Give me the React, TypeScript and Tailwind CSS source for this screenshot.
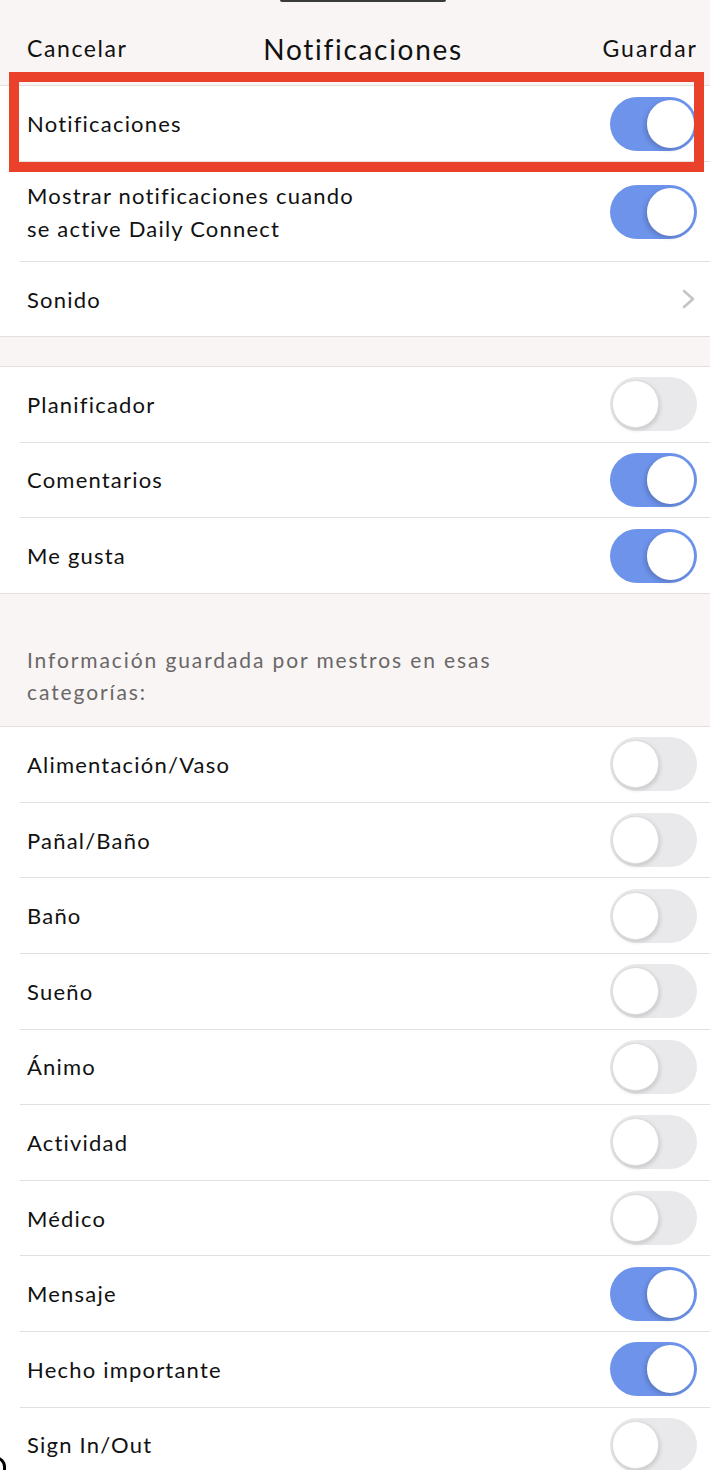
import React from "react";

function Toggle({ on }: { on: boolean }) {
  return on ? (
    <div className="w-[87px] h-[54px] rounded-full bg-[#6d93eb] shrink-0 flex items-center justify-end pr-[3px]">
      <div className="w-[47px] h-[48px] rounded-full bg-white shadow-[-2px_2px_4px_rgba(0,0,0,0.18)]" />
    </div>
  ) : (
    <div className="w-[87px] h-[54px] rounded-full bg-[#e9e9eb] shrink-0 flex items-center justify-start pl-[2px]">
      <div className="w-[47px] h-[48px] rounded-full bg-white border border-[#dcdcdc] shadow-[1px_2px_4px_rgba(0,0,0,0.15)]" />
    </div>
  );
}

function Row({
  label,
  on,
  chevron,
  sep = true,
  h = "h-[75.6px]",
}: {
  label: React.ReactNode;
  on?: boolean;
  chevron?: boolean;
  sep?: boolean;
  h?: string;
}) {
  return (
    <div className={`flex shrink-0 pl-[20px] bg-white ${h}`}>
      <div
        className={`flex-1 flex items-center justify-between pl-[7px] pr-[13px] ${
          sep ? "border-b border-[#e2e0df]" : ""
        }`}
      >
        <div className="text-[22px] leading-[33px] tracking-[1.2px] text-[#111]">{label}</div>
        {chevron ? (
          <svg width="14" height="20" viewBox="0 0 14 20" className="mr-[1px]">
            <path
              d="M2 2 L11 10 L2 18"
              fill="none"
              stroke="#c4c4c8"
              strokeWidth="2.6"
              strokeLinecap="round"
              strokeLinejoin="round"
            />
          </svg>
        ) : (
          <Toggle on={!!on} />
        )}
      </div>
    </div>
  );
}

export default function App() {
  const cats: [string, boolean][] = [
    ["Alimentación/Vaso", false],
    ["Pañal/Baño", false],
    ["Baño", false],
    ["Sueño", false],
    ["Ánimo", false],
    ["Actividad", false],
    ["Médico", false],
    ["Mensaje", true],
    ["Hecho importante", true],
    ["Sign In/Out", false],
  ];
  return (
    <div
      className="relative w-[710px] h-[1470px] overflow-hidden bg-white flex flex-col"
      style={{ fontFamily: "Lato, 'Noto Sans', sans-serif" }}
    >
      {/* Header */}
      <div className="h-[86px] shrink-0 bg-[#f8f5f4] border-b border-[#e2e0df] flex flex-col">
        <div className="flex justify-center pl-[15px]">
          <div className="w-[166px] h-[2px] rounded-b-full bg-[#3a3a3a]" />
        </div>
        <div className="flex-1 flex items-center justify-between pl-[27px] pr-[12px] pt-[10px]">
          <span className="text-[23px] tracking-[1.6px] text-[#111]">Cancelar</span>
          <span className="text-[28px] tracking-[1.7px] text-[#111] ml-[-4px]">Notificaciones</span>
          <span className="text-[23px] tracking-[2px] text-[#111]">Guardar</span>
        </div>
      </div>

      {/* Section 1 */}
      <div className="relative shrink-0">
        <Row label="Notificaciones" on h="h-[76px]" />
        <Row
          label={
            <>
              Mostrar notificaciones cuando
              <br />
              se active Daily Connect
            </>
          }
          on
          h="h-[100px]"
        />
        <Row label="Sonido" chevron sep={false} h="h-[74px]" />
        {/* Red highlight overlay */}
        <div className="absolute left-[9px] top-[-14px] w-[695px] h-[100px] border-[10px] border-[#e9412a] pointer-events-none" />
      </div>

      <div className="h-[31px] shrink-0 bg-[#f8f5f4] border-y border-[#e2e0df]" />

      {/* Section 2 */}
      <Row label="Planificador" on={false} />
      <Row label="Comentarios" on />
      <Row label="Me gusta" on sep={false} h="h-[75px]" />

      <div className="h-[134px] shrink-0 bg-[#f8f5f4] border-y border-[#e2e0df] pl-[27px] pt-[50px]">
        <div className="text-[21px] leading-[32px] tracking-[1.9px] text-[#6a6767]">
          Información guardada por mestros en esas
          <br />
          categorías:
        </div>
      </div>

      {cats.map(([l, o]) => (
        <Row key={l} label={l} on={o} />
      ))}

      <div className="absolute left-[-16px] bottom-[-16px] w-[22px] h-[30px] rounded-full border-[3px] border-black" />
    </div>
  );
}
